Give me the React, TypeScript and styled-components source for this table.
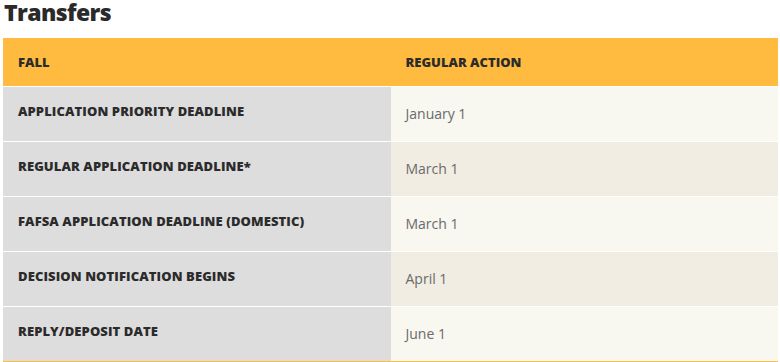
import styled, { createGlobalStyle } from 'styled-components';

const rows = [
  { label: 'Application Priority Deadline', date: 'January 1' },
  { label: 'Regular Application Deadline*', date: 'March 1' },
  { label: 'FAFSA Application Deadline (Domestic)', date: 'March 1' },
  { label: 'Decision Notification Begins', date: 'April 1' },
  { label: 'Reply/Deposit Date', date: 'June 1' },
];

const App = () => (
  <>
    <Global />
    <Page>
      <Title>Transfers</Title>
      <Table>
        <thead>
          <tr>
            <HeadCell>Fall</HeadCell>
            <HeadCell>Regular Action</HeadCell>
          </tr>
        </thead>
        <tbody>
          {rows.map((r, i) => (
            <tr key={r.label}>
              <LabelCell>{r.label}</LabelCell>
              <ValueCell $alt={i % 2 === 1}>{r.date}</ValueCell>
            </tr>
          ))}
        </tbody>
      </Table>
    </Page>
  </>
);

const Global = createGlobalStyle`
  body {
    margin: 0;
    background: #fff;
    font-family: "Open Sans", "Noto Sans", sans-serif;
  }
`;

const Page = styled.div`
  padding: 0 2px 0 3px;
`;

const Title = styled.h2`
  margin: 0;
  padding: 0 0 0 1px;
  height: 38px;
  font-size: 23px;
  line-height: 24px;
  font-weight: 800;
  color: #2a2a2a;
  letter-spacing: -0.6px;
`;

const Table = styled.table`
  width: 100%;
  border-collapse: collapse;
  table-layout: fixed;
  border-bottom: 2px solid #febb40;
`;

const HeadCell = styled.th`
  background: #febb40;
  height: 48px;
  padding: 0 15px;
  text-align: left;
  text-transform: uppercase;
  font-size: 13px;
  font-weight: 800;
  color: #2b2b2b;
  border-bottom: 1px solid #fff;
`;

const LabelCell = styled.td`
  width: 50%;
  background: #dddddd;
  height: 55px;
  box-sizing: border-box;
  padding: 15px 15px 0;
  vertical-align: top;
  text-transform: uppercase;
  font-size: 13px;
  font-weight: 800;
  letter-spacing: 0.1px;
  color: #2b2b2b;
  border-bottom: 1px solid #fff;
`;

const ValueCell = styled.td<{ $alt?: boolean }>`
  background: ${p => (p.$alt ? '#f2ede2' : '#f8f7f0')};
  height: 55px;
  box-sizing: border-box;
  padding: 17px 15px 0;
  vertical-align: top;
  font-size: 14px;
  color: #6a6a6a;
  border-bottom: 1px solid #fff;
`;

export default App;
